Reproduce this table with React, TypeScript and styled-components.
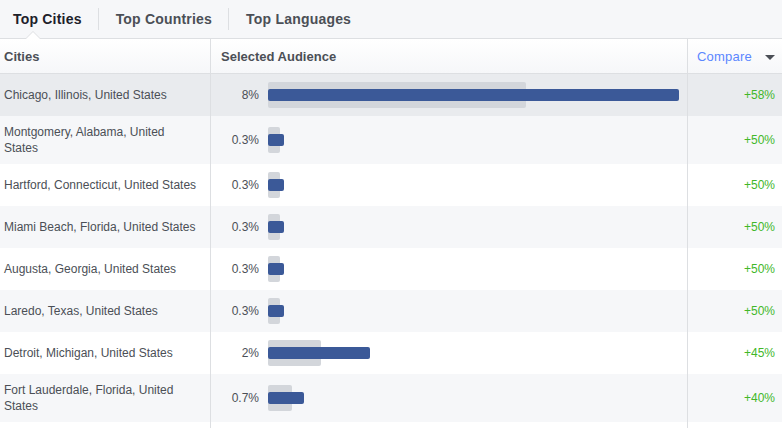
import React from "react";
import styled, { createGlobalStyle } from "styled-components";

const GlobalStyle = createGlobalStyle`
  html, body { margin: 0; padding: 0; background: #fff; }
  body { font-family: "Liberation Sans", Arial, sans-serif; }
`;

const Page = styled.div`
  width: 782px;
  height: 428px;
  overflow: hidden;
  background: #fff;
`;

const TabBar = styled.div`
  display: flex;
  align-items: center;
  height: 38px;
  background: #f6f7f9;
  border-bottom: 1px solid #dddfe2;
`;

const Tab = styled.div<{ $active?: boolean; $first?: boolean; $last?: boolean }>`
  position: relative;
  height: 38px;
  display: flex;
  align-items: center;
  padding: 0 17px 0 ${(p) => (p.$first ? "13px" : "17px")};
  font-size: 14px;
  font-weight: bold;
  letter-spacing: 0.2px;
  color: ${(p) => (p.$active ? "#1d2129" : "#4b4f56")};
  &::after {
    content: "";
    display: ${(p) => (p.$last ? "none" : "block")};
    position: absolute;
    right: 0;
    top: 8px;
    height: 22px;
    border-right: 1px solid #dddfe2;
  }
`;

const Notch = styled.span`
  position: absolute;
  left: 25px;
  bottom: -1px;
  width: 0;
  height: 0;
  border-left: 8px solid transparent;
  border-right: 8px solid transparent;
  border-bottom: 8px solid #dddfe2;
  &::after {
    content: "";
    position: absolute;
    left: -7px;
    top: 1px;
    border-left: 7px solid transparent;
    border-right: 7px solid transparent;
    border-bottom: 7px solid #fff;
  }
`;

const Grid = styled.div`
  display: grid;
  grid-template-columns: 210px 477px 95px;
`;

const HeadCell = styled.div<{ $pad: string; $divider?: boolean }>`
  height: 34px;
  display: flex;
  align-items: center;
  padding-left: ${(p) => p.$pad};
  background: linear-gradient(#ffffff, #f6f7f9);
  border-bottom: 1px solid #dddfe2;
  border-left: ${(p) => (p.$divider ? "1px solid #dddfe2" : "none")};
  font-size: 13px;
  font-weight: bold;
  color: #4b4f56;
`;

const CompareHead = styled(HeadCell)`
  justify-content: space-between;
  padding-right: 7px;
  font-weight: normal;
  letter-spacing: 0.2px;
  color: #5b87ff;
`;

const Caret = styled.span`
  width: 0;
  height: 0;
  margin-top: 3px;
  border-left: 5px solid transparent;
  border-right: 5px solid transparent;
  border-top: 5px solid #4b4f56;
`;

const Cell = styled.div<{ $bg: string; $divider?: boolean }>`
  display: flex;
  align-items: center;
  min-height: 26px;
  padding: 8px 0;
  background: ${(p) => p.$bg};
  border-left: ${(p) => (p.$divider ? "1px solid #dddfe2" : "none")};
  font-size: 12px;
  line-height: 16px;
  color: #4b4f56;
`;

const CityCell = styled(Cell)`
  padding-left: 4px;
  padding-right: 10px;
`;

const Pct = styled.span`
  width: 48px;
  margin-right: 9px;
  text-align: right;
`;

const BarTrack = styled.div`
  position: relative;
  height: 26px;
  flex: 1;
  margin-right: 8px;
`;

const BaseBar = styled.div`
  position: absolute;
  left: 0;
  top: 0;
  height: 26px;
  border-radius: 2px;
  background: #d3d6db;
`;

const AudBar = styled.div`
  position: absolute;
  left: 0;
  top: 7px;
  height: 12px;
  border-radius: 2px;
  background: #3b5998;
`;

const CompareCell = styled(Cell)`
  justify-content: flex-end;
  padding-right: 7px;
  color: #42b72a;
`;

const rows = [
  { city: "Chicago, Illinois, United States", pct: "8%", aud: 411, base: 258, cmp: "+58%" },
  { city: "Montgomery, Alabama, United States", pct: "0.3%", aud: 16, base: 12, cmp: "+50%" },
  { city: "Hartford, Connecticut, United States", pct: "0.3%", aud: 16, base: 12, cmp: "+50%" },
  { city: "Miami Beach, Florida, United States", pct: "0.3%", aud: 16, base: 12, cmp: "+50%" },
  { city: "Augusta, Georgia, United States", pct: "0.3%", aud: 16, base: 12, cmp: "+50%" },
  { city: "Laredo, Texas, United States", pct: "0.3%", aud: 16, base: 12, cmp: "+50%" },
  { city: "Detroit, Michigan, United States", pct: "2%", aud: 102, base: 53, cmp: "+45%" },
  { city: "Fort Lauderdale, Florida, United States", pct: "0.7%", aud: 36, base: 24, cmp: "+40%" },
  { city: "", pct: "", aud: 0, base: 0, cmp: "" },
];

const rowBg = (i: number) => (i === 0 ? "#e9ebee" : i % 2 === 1 ? "#f6f7f9" : "#ffffff");

export default function App() {
  return (
    <Page>
      <GlobalStyle />
      <TabBar>
        <Tab $active $first>
          Top Cities
          <Notch />
        </Tab>
        <Tab>Top Countries</Tab>
        <Tab $last>Top Languages</Tab>
      </TabBar>
      <Grid>
        <HeadCell $pad="4px">Cities</HeadCell>
        <HeadCell $pad="10px" $divider>
          Selected Audience
        </HeadCell>
        <CompareHead $pad="9px" $divider>
          Compare
          <Caret />
        </CompareHead>
        {rows.map((r, i) => (
          <React.Fragment key={i}>
            <CityCell $bg={rowBg(i)}>{r.city}</CityCell>
            <Cell $bg={rowBg(i)} $divider>
              {r.pct && (
                <>
                  <Pct>{r.pct}</Pct>
                  <BarTrack>
                    <BaseBar style={{ width: r.base }} />
                    <AudBar style={{ width: r.aud }} />
                  </BarTrack>
                </>
              )}
            </Cell>
            <CompareCell $bg={rowBg(i)} $divider>
              {r.cmp}
            </CompareCell>
          </React.Fragment>
        ))}
      </Grid>
    </Page>
  );
}
